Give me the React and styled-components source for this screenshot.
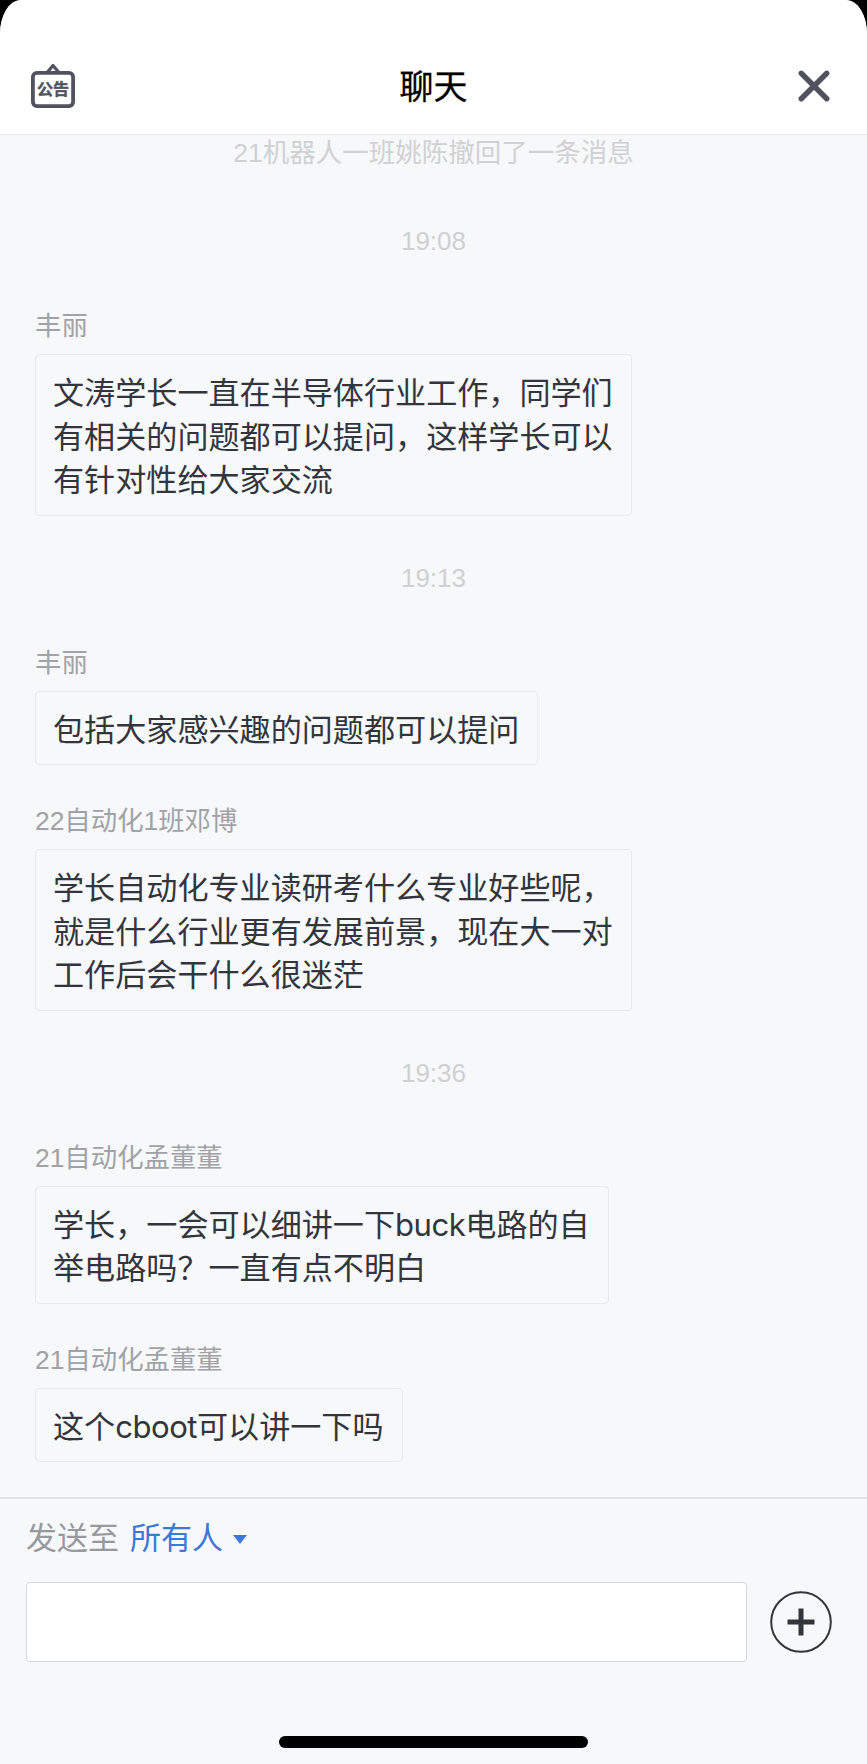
import React from 'react';
import styled, { createGlobalStyle } from 'styled-components';

const messages = [
  { type: 'notice', text: '21机器人一班姚陈撤回了一条消息' },
  { type: 'time', text: '19:08' },
  { type: 'msg', name: '丰丽', lines: ['文涛学长一直在半导体行业工作，同学们', '有相关的问题都可以提问，这样学长可以', '有针对性给大家交流'] },
  { type: 'time', text: '19:13' },
  { type: 'msg', name: '丰丽', lines: ['包括大家感兴趣的问题都可以提问'] },
  { type: 'msg', name: '22自动化1班邓博', lines: ['学长自动化专业读研考什么专业好些呢，', '就是什么行业更有发展前景，现在大一对', '工作后会干什么很迷茫'] },
  { type: 'time', text: '19:36' },
  { type: 'msg', name: '21自动化孟董董', lines: ['学长，一会可以细讲一下buck电路的自', '举电路吗？一直有点不明白'] },
  { type: 'msg', name: '21自动化孟董董', lines: ['这个cboot可以讲一下吗'] },
];

// latin words run a little tight in the original
const renderLine = (line) =>
  line.split(/([a-z]+)/).map((part, i) => (i % 2 ? <Latin key={i}>{part}</Latin> : part));

const App = () => {
  return (
    <>
      <GlobalStyle />
      <Screen>
        <Header>
          <NoticeIcon width="46" height="48" viewBox="0 0 46 48">
            <path d="M17.5 10 L23 3.5 L28.5 10" fill="none" stroke="#50535f" strokeWidth="3.2" strokeLinejoin="round" />
            <rect x="2.9" y="10.9" width="40.2" height="33.2" rx="4" fill="none" stroke="#50535f" strokeWidth="3.8" />
            <text x="23" y="33" textAnchor="middle" fontSize="16" fontWeight="700" fill="#50535f" stroke="#50535f" strokeWidth="0.4" fontFamily="'Noto Sans CJK SC', sans-serif">公告</text>
          </NoticeIcon>
          <Title>聊天</Title>
          <CloseIcon width="34" height="34" viewBox="0 0 34 34">
            <path d="M4.25 4.25 L29.75 29.75 M29.75 4.25 L4.25 29.75" stroke="#50535f" strokeWidth="5.4" strokeLinecap="round" />
          </CloseIcon>
        </Header>
        <ChatList>
          {messages.map((m, i) => {
            if (m.type === 'notice') return <Notice key={i}>{m.text}</Notice>;
            if (m.type === 'time') return <TimeStamp key={i}>{m.text}</TimeStamp>;
            return (
              <Message key={i}>
                <Sender>{m.name}</Sender>
                <Bubble>
                  {m.lines.map((line) => <BubbleLine key={line}>{renderLine(line)}</BubbleLine>)}
                </Bubble>
              </Message>
            );
          })}
        </ChatList>
        <Footer>
          <SendTo>
            发送至<Target>所有人</Target>
            <Caret />
          </SendTo>
          <InputRow>
            <Input />
            <PlusIcon width="62" height="62" viewBox="0 0 62 62">
              <circle cx="31" cy="31" r="29.8" fill="none" stroke="#33353c" strokeWidth="2" />
              <path d="M31 17.5 V44.5 M17.5 31 H44.5" stroke="#33353c" strokeWidth="5" />
            </PlusIcon>
          </InputRow>
        </Footer>
        <HomeBar />
      </Screen>
    </>
  );
};

export default App;

const GlobalStyle = createGlobalStyle`
  html, body {
    margin: 0;
    padding: 0;
    background: #000;
  }
`;

const Screen = styled.div`
  width: 867px;
  height: 1764px;
  background: #f7f8fa;
  border-radius: 21px 21px 0 0 / 34px 34px 0 0;
  overflow: hidden;
  display: flex;
  flex-direction: column;
  font-family: "Liberation Sans", "Noto Sans CJK SC", sans-serif;
`;

const Header = styled.header`
  height: 134px;
  flex: none;
  background: #fff;
  border-bottom: 1px solid #e9e9eb;
  display: grid;
  grid-template-columns: 1fr auto 1fr;
  align-items: end;
  padding: 0 36px 0 30px;
`;

const NoticeIcon = styled.svg`
  margin-bottom: 24px;
`;

const Title = styled.div`
  font-size: 34px;
  line-height: 44px;
  color: #000;
  margin-bottom: 25px;
  margin-left: 6px;
  -webkit-text-stroke: 0.3px #000;
`;

const CloseIcon = styled.svg`
  justify-self: end;
  margin-bottom: 31px;
`;

const ChatList = styled.main`
  height: 1362px;
  flex: none;
  box-sizing: border-box;
  padding: 0 35px;
  display: flex;
  flex-direction: column;
`;

const Notice = styled.div`
  text-align: center;
  font-size: 26.5px;
  line-height: 36px;
  color: #d0d1d4;
  margin-bottom: 8px;
`;

const TimeStamp = styled.div`
  text-align: center;
  font-size: 26px;
  line-height: 36px;
  color: #cfd0d3;
  margin: 44px 0 49px;
`;

const Message = styled.section`
  display: flex;
  flex-direction: column;
  align-items: flex-start;
  & + & {
    margin-top: 38px;
  }
`;

const Sender = styled.div`
  font-size: 26.4px;
  line-height: 36px;
  color: #a1a2a6;
  margin-bottom: 10px;
`;

const Bubble = styled.div`
  box-sizing: border-box;
  border: 1px solid #e8e9ec;
  border-radius: 4px;
  padding: 17px 18px 12px 17px;
  font-family: Inter, "Noto Sans CJK SC", sans-serif;
  font-size: 31.1px;
  line-height: 43.5px;
  color: #33353c;
`;

const BubbleLine = styled.div`
  white-space: nowrap;
`;

const Latin = styled.span`
  letter-spacing: -0.5px;
`;

const Footer = styled.footer`
  border-top: 2px solid #e2e3e5;
  box-shadow: inset 0 1px 0 #fafbfc;
  padding: 19px 35px 0 26px;
  flex: none;
`;

const SendTo = styled.div`
  display: flex;
  align-items: center;
  font-size: 31px;
  line-height: 42px;
  color: #98999d;
`;

const Target = styled.span`
  color: #3d78d8;
  margin-left: 11px;
`;

const Caret = styled.i`
  width: 0;
  height: 0;
  margin-left: 10px;
  border-left: 7px solid transparent;
  border-right: 7px solid transparent;
  border-top: 9px solid #3d78d8;
`;

const InputRow = styled.div`
  display: flex;
  align-items: center;
  justify-content: space-between;
  margin-top: 22px;
`;

const Input = styled.div`
  box-sizing: border-box;
  width: 721px;
  height: 80px;
  background: #fff;
  border: 1px solid #d6d7da;
  border-radius: 4px;
`;

const PlusIcon = styled.svg`
  display: block;
`;

const HomeBar = styled.div`
  flex: none;
  width: 309px;
  height: 12px;
  margin: 74px auto 0;
  border-radius: 6px;
  background: #000;
`;
